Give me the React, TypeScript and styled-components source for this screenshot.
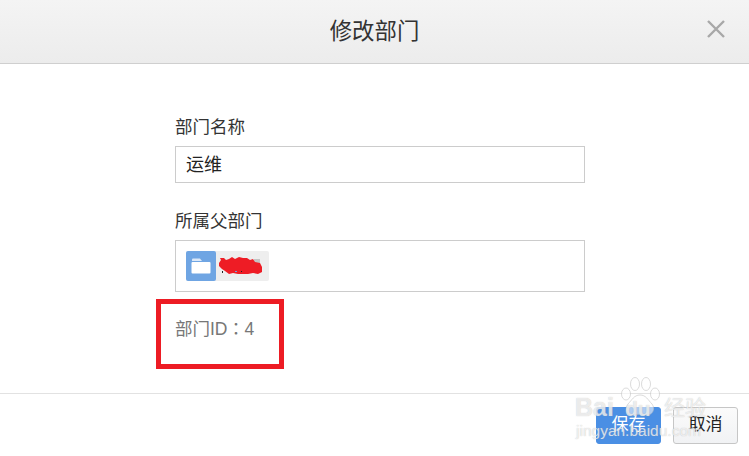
import React from 'react';
import styled, { createGlobalStyle } from 'styled-components';

const Global = createGlobalStyle`
  html, body {
    margin: 0;
    padding: 0;
    background: #fff;
    overflow: hidden;
  }
  body {
    font-family: "Noto Sans CJK SC", "Liberation Sans", sans-serif;
    color: #333;
  }
`;

const Dialog = styled.div`
  position: relative;
  width: 749px;
  height: 456px;
  display: flex;
  flex-direction: column;
  overflow: hidden;
`;

const Header = styled.header`
  height: 63px;
  flex: none;
  display: flex;
  align-items: center;
  justify-content: center;
  position: relative;
  background: linear-gradient(#f4f4f4, #ececec);
  border-bottom: 1px solid #cfcfcf;
`;

const Title = styled.h1`
  margin: -5px 0 0;
  font-size: 22.4px;
  font-weight: 400;
  line-height: 30px;
  color: #333;
`;

const Close = styled.button`
  position: absolute;
  right: 23px;
  top: 19px;
  width: 20px;
  height: 20px;
  padding: 0;
  border: 0;
  background: none;
  color: #a8a8a8;
  display: flex;
`;

const Body = styled.main`
  height: 330px;
  flex: none;
  padding: 50px 0 0 175px;
  box-sizing: border-box;
  border-bottom: 1px solid #e2e2e2;
  display: flex;
  flex-direction: column;
  position: relative;
`;

const Label = styled.label`
  font-size: 17.5px;
  line-height: 24px;
  height: 24px;
  margin-top: ${p => (p.htmlFor === 'parent' ? '25px' : '0')};
  margin-bottom: 8px;
  color: #333;
`;

const Field = styled.div`
  width: 410px;
  height: 37px;
  box-sizing: border-box;
  border: 1px solid #ccc;
  padding: 0 10px;
  font-size: 18px;
  line-height: 33px;
  color: #222;
`;

const PickerBox = styled.div`
  width: 410px;
  height: 52px;
  box-sizing: border-box;
  border: 1px solid #ccc;
  padding: 10px;
  display: flex;
`;

const Tag = styled.div`
  width: 83px;
  height: 30px;
  border-radius: 2px;
  background: #eee;
  display: flex;
`;

const TagIcon = styled.div`
  width: 30px;
  height: 30px;
  border-radius: 2px;
  background: #6fa5e3;
  display: flex;
  align-items: center;
  justify-content: center;
`;

const Scribble = styled.svg`
  width: 50px;
  height: 30px;
`;

const IdText = styled.div`
  margin-top: 24px;
  font-family: "Liberation Sans", "Noto Sans CJK SC", sans-serif;
  font-size: 17.5px;
  line-height: 24px;
  color: #777;
`;

const Colon = styled.span`
  font-family: "Noto Sans CJK TC", sans-serif;
  font-size: 17px;
`;

const Highlight = styled.div`
  position: absolute;
  left: 156px;
  top: 299px;
  width: 128px;
  height: 70px;
  box-sizing: border-box;
  border: 5px solid #ed1c24;
`;

const Footer = styled.footer`
  flex: 1;
  display: flex;
  justify-content: flex-end;
  align-items: flex-start;
  gap: 12px;
  padding: 13px 11px 0 0;
`;

const Button = styled.button<{ primary?: boolean }>`
  width: 65px;
  height: 37px;
  padding: 0 0 6px;
  box-sizing: border-box;
  border-radius: 3px;
  font-family: inherit;
  font-size: 17px;
  color: ${p => (p.primary ? '#fff' : '#222')};
  background: ${p => (p.primary ? '#4a8fe4' : 'linear-gradient(#fbfbfb, #f1f2f4)')};
  border: 1px solid ${p => (p.primary ? '#4a8fe4' : '#c6c6c6')};
`;

const Watermark = styled.div`
  position: absolute;
  left: 573px;
  top: 376px;
  width: 170px;
  height: 70px;
  color: rgba(255, 255, 255, 0.7);
  text-shadow: 0 0 1px rgba(150, 150, 150, 0.6);
  pointer-events: none;
`;

const MarkBai = styled.div`
  position: absolute;
  left: 2px;
  top: 18px;
  font-family: "Liberation Sans", sans-serif;
  font-weight: 700;
  font-size: 25px;
  line-height: 26px;
`;

const MarkDu = styled.div`
  position: absolute;
  left: 52px;
  top: 22px;
  font-family: "Liberation Sans", sans-serif;
  font-weight: 700;
  font-size: 21px;
  line-height: 22px;
`;

const MarkJy = styled.div`
  position: absolute;
  left: 3px;
  top: 46px;
  font-family: "Liberation Sans", sans-serif;
  font-size: 15.5px;
  line-height: 18px;
`;

const MarkCn = styled.div`
  position: absolute;
  left: 91px;
  top: 18px;
  font-size: 21px;
  line-height: 24px;
`;

const MarkPaw = styled.svg`
  position: absolute;
  left: 46px;
  top: 0;
  width: 41px;
  height: 42px;
`;

export default function App() {
  return (
    <>
      <Global />
      <Dialog>
        <Header>
          <Title>修改部门</Title>
          <Close aria-label="关闭">
            <svg width="20" height="20" viewBox="0 0 20 20" fill="none" stroke="currentColor" strokeWidth="2.4">
              <path d="M2 2 L18 18 M18 2 L2 18" />
            </svg>
          </Close>
        </Header>
        <Body>
          <Label htmlFor="name">部门名称</Label>
          <Field id="name">运维</Field>
          <Label htmlFor="parent">所属父部门</Label>
          <PickerBox id="parent">
            <Tag>
              <TagIcon>
                <svg width="20" height="16" viewBox="0 0 20 16">
                  <path d="M1 3 V1.5 Q1 .5 2 .5 H9 L11 3 Z" fill="#dbe8f8" />
                  <rect x="0.5" y="4" width="19" height="11.5" rx="1" fill="#fff" />
                </svg>
              </TagIcon>
              <Scribble viewBox="0 0 50 30">
                <path d="M38 8 H44 V12 H38 Z" fill="#c4c4c4" />
                <path
                  d="M3 12 L5 9 L4 7 L8 7 L10 9 L13 8 L16 6 L19 8 L23 6 L27 7 L31 7 L34 9 L37 8 L39 11 L44 12 L46 16 L46 21 L42 23 L37 22 L32 23 L27 23 L22 23 L17 22 L13 23 L9 20 L6 18 L3 15 Z"
                  fill="#ee1c25"
                />
                <rect x="6" y="20" width="1" height="2" fill="#222" />
                <rect x="19" y="20" width="2" height="1" fill="#7aa0d8" />
                <rect x="25" y="20" width="1" height="1" fill="#222" />
              </Scribble>
            </Tag>
          </PickerBox>
          <IdText>
            部门ID<Colon>：</Colon>4
          </IdText>
        </Body>
        <Footer>
          <Button primary>保存</Button>
          <Button>取消</Button>
        </Footer>
        <Highlight />
        <Watermark>
          <MarkPaw viewBox="0 0 41 42" fill="rgba(255,255,255,.55)" stroke="rgba(190,190,190,.55)">
            <ellipse cx="7" cy="18" rx="4.5" ry="6" />
            <ellipse cx="16" cy="8" rx="4.5" ry="6.5" />
            <ellipse cx="27" cy="8" rx="4.5" ry="6.5" />
            <ellipse cx="36" cy="18" rx="4.5" ry="6" />
            <path d="M21 19 C27 19 29 24 33 28 C37 33 33 40 27 39 C23 38 19 38 15 39 C9 40 5 33 9 28 C13 24 15 19 21 19 Z" />
          </MarkPaw>
          <MarkBai>Bai</MarkBai>
          <MarkDu>du</MarkDu>
          <MarkCn>经验</MarkCn>
          <MarkJy>jingyan.baidu.com</MarkJy>
        </Watermark>
      </Dialog>
    </>
  );
}
